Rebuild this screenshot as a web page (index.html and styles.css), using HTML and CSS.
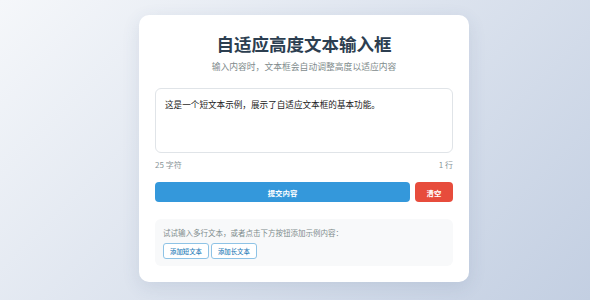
FILE: index.html
```html
<!DOCTYPE html>
<html lang="zh-CN">
<head>
  <meta charset="UTF-8" />
  <meta name="viewport" content="width=device-width, initial-scale=1.0" />
  <title>自适应高度文本输入框</title>
  <link rel="stylesheet" href="styles.css">
</head>
<body>
  <div class="container">
    <h1>自适应高度文本输入框</h1>
    <p class="subtitle">输入内容时，文本框会自动调整高度以适应内容</p>

    <!-- Auto-resize textarea -->
    <textarea id="autoText">这是一个短文本示例，展示了自适应文本框的基本功能。</textarea>
    <div class="counter">
      <span id="charCount">25 字符</span>
      <span id="lineCount">1 行</span>
    </div>

    <!-- Actions -->
    <div class="actions">
      <button class="btn-submit">提交内容</button>
      <button class="btn-clear">清空</button>
    </div>

    <!-- Hints -->
    <div class="hint">
      <p>试试输入多行文本，或者点击下方按钮添加示例内容：</p>
      <div class="hint-buttons">
        <button class="btn-sample">添加短文本</button>
        <button class="btn-sample">添加长文本</button>
      </div>
    </div>
  </div>
</body>
</html>
```

FILE: styles.css
```css
/* Global styles */
body {
  margin: 0;
  height: 300px;
  padding: 15px 0 0 18px;
  box-sizing: border-box;
  display: flex;
  justify-content: center;
  align-items: flex-start;
  font-family: "Noto Sans CJK SC", "Noto Sans", sans-serif;
  background: linear-gradient(135deg, #f5f7fa 0%, #c3cfe2 100%);
  overflow: hidden;
}
.container {
  width: 330px;
  box-sizing: border-box;
  padding: 16px 16px 16px;
  background-color: #ffffff;
  border-radius: 10px;
  box-shadow: 0 5px 18px rgba(60, 80, 120, 0.12);
}
h1 {
  margin: 0;
  text-align: center;
  font-size: 17.5px;
  line-height: 26px;
  font-weight: 700;
  color: #2c3e50;
}
.subtitle {
  margin: 2px 0 0;
  text-align: center;
  font-size: 8.8px;
  line-height: 16px;
  color: #7f8c8d;
}
textarea {
  display: block;
  width: 100%;
  height: 65px;
  margin-top: 13px;
  padding: 7px 9px;
  box-sizing: border-box;
  border: 1px solid #e0e4e8;
  border-radius: 6px;
  resize: none;
  font-family: inherit;
  font-size: 8.6px;
  line-height: 16px;
  color: #222;
  outline: none;
}
.counter {
  display: flex;
  justify-content: space-between;
  margin-top: 5px;
  font-size: 8px;
  line-height: 14px;
  color: #8a9599;
}
.actions {
  display: flex;
  gap: 5px;
  margin-top: 10px;
}
.actions button {
  height: 20px;
  border: none;
  border-radius: 4px;
  color: #fff;
  font-family: inherit;
  font-size: 7.4px;
  font-weight: 700;
  cursor: pointer;
}
.btn-submit {
  flex: 1;
  background-color: #3498db;
}
.btn-clear {
  width: 38px;
  background-color: #e74c3c;
}
.hint {
  margin-top: 17px;
  padding: 7px 8px 7px;
  background-color: #f8f9fa;
  border-radius: 6px;
}
.hint p {
  margin: 0;
  font-size: 7.5px;
  line-height: 14px;
  color: #7f8c8d;
}
.hint-buttons {
  display: flex;
  gap: 2px;
  margin-top: 3px;
}
.btn-sample {
  height: 16px;
  padding: 0 6px;
  background-color: #fff;
  border: 1px solid #8ec3e6;
  border-radius: 3px;
  color: #2a80b9;
  font-family: inherit;
  font-size: 6.4px;
  font-weight: 500;
  cursor: pointer;
}
```
